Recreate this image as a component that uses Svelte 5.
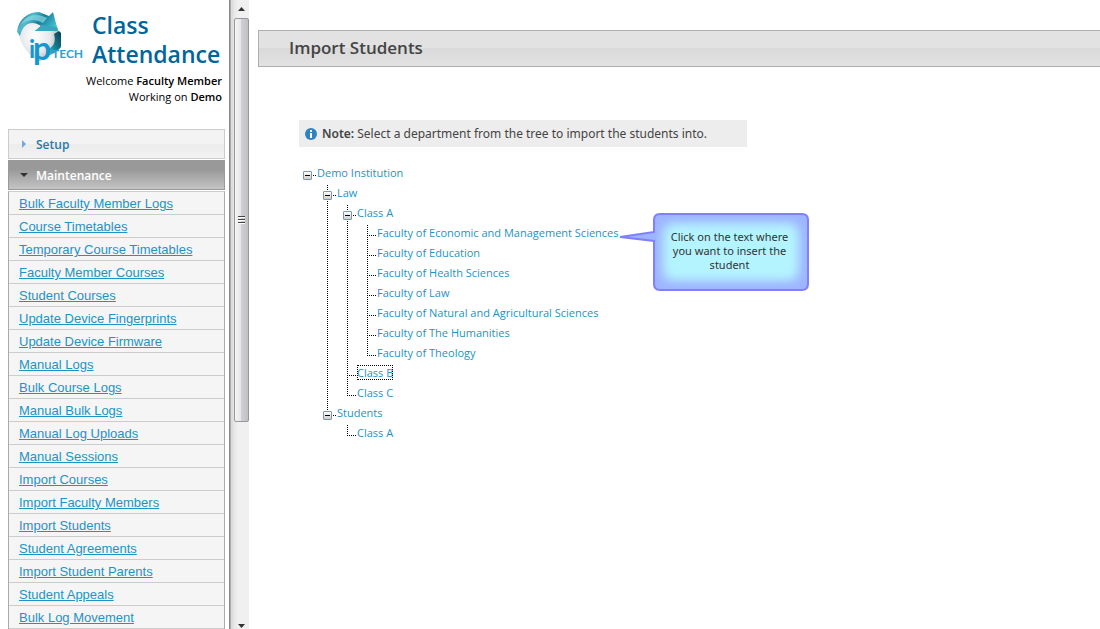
<script>
  const links = [
    "Bulk Faculty Member Logs",
    "Course Timetables",
    "Temporary Course Timetables",
    "Faculty Member Courses",
    "Student Courses",
    "Update Device Fingerprints",
    "Update Device Firmware",
    "Manual Logs",
    "Bulk Course Logs",
    "Manual Bulk Logs",
    "Manual Log Uploads",
    "Manual Sessions",
    "Import Courses",
    "Import Faculty Members",
    "Import Students",
    "Student Agreements",
    "Import Student Parents",
    "Student Appeals",
    "Bulk Log Movement",
  ];

  let tree = $state([
    {
      name: "Demo Institution",
      open: true,
      children: [
        {
          name: "Law",
          open: true,
          children: [
            {
              name: "Class A",
              open: true,
              children: [
                { name: "Faculty of Economic and Management Sciences" },
                { name: "Faculty of Education" },
                { name: "Faculty of Health Sciences" },
                { name: "Faculty of Law" },
                { name: "Faculty of Natural and Agricultural Sciences" },
                { name: "Faculty of The Humanities" },
                { name: "Faculty of Theology" },
              ],
            },
            { name: "Class B", id: "class-b" },
            { name: "Class C" },
          ],
        },
        {
          name: "Students",
          open: true,
          children: [{ name: "Class A", id: "students-a" }],
        },
      ],
    },
  ]);

  let selected = $state("class-b");
  let maintenanceOpen = $state(true);

  function select(e, node) {
    e.preventDefault();
    selected = node.id ?? node.name;
  }
</script>

{#snippet branch(nodes)}
  <ul>
    {#each nodes as node}
      <li>
        <div class="node">
          <span class="joint">
            {#if node.children}
              <button
                class="toggle"
                class:closed={!node.open}
                aria-label={node.open ? "Collapse" : "Expand"}
                aria-expanded={node.open}
                onclick={() => (node.open = !node.open)}
              ></button>
            {/if}
          </span>
          <a
            href="#import"
            class:selected={selected === (node.id ?? node.name)}
            onclick={(e) => select(e, node)}
          >{node.name}</a>
        </div>
        {#if node.children && node.open}
          {@render branch(node.children)}
        {/if}
      </li>
    {/each}
  </ul>
{/snippet}

<div class="layout">
  <aside>
    <div class="side">
      <header>
        <svg class="logo" width="72" height="58" viewBox="0 0 72 58" aria-hidden="true">
          <defs>
            <radialGradient id="ball" cx="0.4" cy="0.45" r="0.65">
              <stop offset="0" stop-color="#ffffff" />
              <stop offset="0.6" stop-color="#e4e7ea" />
              <stop offset="1" stop-color="#a3abb0" />
            </radialGradient>
            <linearGradient id="arrow" x1="0" y1="0" x2="1" y2="0.5">
              <stop offset="0" stop-color="#0a5266" />
              <stop offset="0.35" stop-color="#54bccf" />
              <stop offset="0.6" stop-color="#137f96" />
              <stop offset="1" stop-color="#4cc3d6" />
            </linearGradient>
            <linearGradient id="tail" x1="1" y1="0" x2="0" y2="1">
              <stop offset="0" stop-color="#093c49" />
              <stop offset="0.6" stop-color="#1b8ba2" />
              <stop offset="1" stop-color="#7cd7e2" />
            </linearGradient>
          </defs>
          <path d="M3 17C5 7 14 4 24 5C37 6 44 16 43 27C42 39 32 46 24 50C12 45 1 30 3 17Z" fill="url(#ball)" />
          <path d="M1 21C2 8 12 1 23 1L33 5 37 1 42 20 19 20 25 15C16 9 7 12 4 25Z" fill="url(#arrow)" />
          <path d="M4 15C9 4 20 1 31 7L27 12C18 7 10 8 4 15Z" fill="#8bd8e3" opacity="0.7" />
          <path d="M19 20 26 14 41 16 42 20Z" fill="#35a9bf" />
          <path d="M43 20 45 22 45 36C41 41 36 44 30 45L32 38C38 36 40 30 38 23Z" fill="url(#tail)" />
          <text class="i" x="13" y="47">i</text>
          <text class="p" x="17" y="49">p</text>
          <text class="tech" x="36" y="47">TECH</text>
        </svg>
        <h1>Class Attendance</h1>
      </header>
      <p class="who">Welcome <b>Faculty Member</b><br />Working on <b>Demo</b></p>

      <nav>
        <button class="section">
          <svg width="4" height="8" viewBox="0 0 4 8" aria-hidden="true"><path d="M0 0 4 4 0 8Z" fill="#72a7e0" /></svg>
          Setup
        </button>
        <button class="section active" aria-expanded={maintenanceOpen} onclick={() => (maintenanceOpen = !maintenanceOpen)}>
          <svg width="8" height="4" viewBox="0 0 8 4" aria-hidden="true"><path d="M0 0H8L4 4Z" fill="#333" /></svg>
          Maintenance
        </button>
        {#if maintenanceOpen}
          <ul class="links">
            {#each links as link}
              <li><a href="#nav">{link}</a></li>
            {/each}
          </ul>
        {/if}
      </nav>
    </div>

    <div class="splitter"></div>
    <div class="scrollbar">
      <svg width="7" height="4" viewBox="0 0 7 4" aria-hidden="true"><path d="M0 4H7L3.500 0Z" fill="#333" /></svg>
      <div class="thumb"><i></i><i></i><i></i></div>
      <svg width="7" height="4" viewBox="0 0 7 4" aria-hidden="true"><path d="M0 0H7L3.500 4Z" fill="#333" /></svg>
    </div>
  </aside>

  <main>
    <h2>Import Students</h2>
    <div class="content">
      <p class="note">
        <svg width="12" height="12" viewBox="0 0 12 12" aria-hidden="true">
          <circle cx="6" cy="6" r="6" fill="#2e83c3" />
          <path d="M5 2H7V4H5ZM5 5H7V10H5Z" fill="#fff" />
        </svg>
        <span><b>Note:</b> Select a department from the tree to import the students into.</span>
      </p>
      <div class="tree">
        {@render branch(tree)}
        <div class="callout">
          <svg width="200" height="80" viewBox="0 0 200 80" aria-hidden="true">
            <defs>
              <filter id="soft" x="-20%" y="-20%" width="140%" height="140%">
                <feGaussianBlur stdDeviation="6" />
              </filter>
              <clipPath id="bubble">
                <path d="M49 2H191Q197 2 197 8V72Q197 78 191 78H49Q43 78 43 72V29L9 25 43 20V8Q43 2 49 2Z" />
              </clipPath>
            </defs>
            <g clip-path="url(#bubble)">
              <rect width="200" height="80" fill="#9db3ff" />
              <rect x="53" y="12" width="134" height="56" rx="6" fill="#b4f4ff" filter="url(#soft)" />
              <rect x="58" y="18" width="124" height="44" rx="6" fill="#b4f4ff" filter="url(#soft)" />
            </g>
            <path
              d="M49 2H191Q197 2 197 8V72Q197 78 191 78H49Q43 78 43 72V29L9 25 43 20V8Q43 2 49 2Z"
              fill="none"
              stroke="#8080ff"
              stroke-width="2"
            />
          </svg>
          <p>Click on the text where you want to insert the student</p>
        </div>
      </div>
    </div>
  </main>
</div>

<style>
  :global(body) {
    margin: 0;
    background: #fff;
  }
  .layout {
    display: flex;
    height: 100vh;
    overflow: hidden;
    font-family: "Trebuchet MS", "Open Sans", sans-serif;
    font-size: 11px;
    color: #000;
  }
  h1, h2, p, ul {
    margin: 0;
    padding: 0;
  }
  ul { list-style: none; }
  b { font-weight: 600; }

  aside {
    display: flex;
    flex: none;
    width: 249px;
  }
  .side {
    flex: 1;
    padding: 11px 4px 0 8px;
    overflow: hidden;
  }
  header {
    display: flex;
    gap: 4px;
    padding-left: 8px;
  }
  .logo {
    flex: none;
    overflow: visible;
  }
  .i, .p {
    font: 700 24px Lato, sans-serif;
    fill: #1496cf;
  }
  .p { font-size: 32px; }
  .tech {
    font: 700 12px Lato, sans-serif;
    fill: #2aa3d3;
  }
  h1 {
    font-size: 23px;
    line-height: 29px;
    font-weight: 600;
    color: #069;
  }
  .who {
    padding: 4px 3px 0 0;
    line-height: 16px;
    text-align: right;
  }
  nav {
    display: flex;
    flex-direction: column;
    margin-top: 24px;
  }
  .section {
    display: flex;
    align-items: center;
    gap: 10px;
    height: 30px;
    margin-bottom: 1px;
    padding: 0 13px;
    border: 1px solid #ccc;
    background: linear-gradient(#f3f3f3 50%, #ececec 50%, #f2f2f2);
    color: #2779aa;
    font: inherit;
    font-size: 12px;
    font-weight: 600;
    cursor: pointer;
  }
  .section.active {
    gap: 8px;
    padding: 0 11px;
    border-color: #999;
    background: linear-gradient(#999 30%, #c4c4c4);
    color: #fff;
  }
  .links {
    border: 1px solid #aaa;
    border-top-color: #ccc;
    background: #f5f5f5;
  }
  .links li {
    padding: 2px 0 0 10px;
    border-bottom: 1px solid #ccc;
    font: 13px/20px "Liberation Sans", sans-serif;
  }
  .links a { color: #1c94c4; }

  .splitter {
    width: 4px;
    background: linear-gradient(90deg, #888 1px, #aaa 1px 2px, #ddd 2px);
  }
  .scrollbar {
    display: flex;
    flex-direction: column;
    align-items: center;
    width: 16px;
    padding: 7px 0 1px;
    box-sizing: border-box;
    background: linear-gradient(90deg, #e3e3e3, #f0f0f0 30%);
  }
  .thumb {
    display: flex;
    flex: 0 0 65%;
    flex-direction: column;
    align-items: center;
    justify-content: center;
    gap: 1px;
    width: 15px;
    margin: 7px 0 auto;
    box-sizing: border-box;
    border: 1px solid #979797;
    border-radius: 2px;
    background: linear-gradient(90deg, #f5f5f5, #e6e6e8 45%, #cfcfd3 50%, #bfbfc5);
  }
  .thumb i {
    width: 7px;
    height: 1px;
    border-bottom: 1px solid #fff;
    background: #444;
  }

  main {
    flex: 1;
    min-width: 0;
    padding: 30px 0 0 9px;
  }
  h2 {
    padding: 0 0 2px 30px;
    border: 1px solid #aeaeae;
    border-right: 0;
    background: linear-gradient(#e2e2e2 50%, #dadada 50%, #e2e2e2);
    font-size: 17px;
    line-height: 33px;
    font-weight: 600;
    color: #444;
  }
  .content { padding: 53px 41px; }
  .note {
    display: flex;
    align-items: center;
    gap: 5px;
    max-width: 442px;
    padding-left: 6px;
    background: #ededed;
    font-family: "Noto Sans", sans-serif;
    font-size: 12px;
    line-height: 27px;
    color: #444;
    white-space: nowrap;
  }

  .tree {
    position: relative;
    margin-top: 18px;
    padding-left: 8px;
  }
  .tree ul ul { padding-left: 20px; }
  .tree li:not(:last-child) {
    background: repeating-linear-gradient(#000 0 1px, transparent 1px 2px) 0 0 / 1px 100% no-repeat;
  }
  .node {
    display: flex;
    height: 20px;
  }
  .joint {
    width: 10px;
    height: 11px;
    background:
      repeating-linear-gradient(#000 0 1px, transparent 1px 2px) 0 0 / 1px 100% no-repeat,
      repeating-linear-gradient(90deg, #000 0 1px, transparent 1px 2px) 0 100% / 100% 1px no-repeat;
  }
  .tree > ul > li > .node > .joint {
    background: repeating-linear-gradient(90deg, #000 0 1px, transparent 1px 2px) 0 100% / 100% 1px no-repeat;
  }
  .toggle {
    display: block;
    width: 9px;
    height: 9px;
    margin: 6px 0 0 -4px;
    padding: 0;
    border: 1px solid #7898b5;
    border-radius: 1px;
    background:
      linear-gradient(#000, #000) center / 5px 1px no-repeat,
      linear-gradient(#fff, #d2cdc3);
  }
  .toggle.closed {
    background:
      linear-gradient(#000, #000) center / 5px 1px no-repeat,
      linear-gradient(#000, #000) center / 1px 5px no-repeat,
      linear-gradient(#fff, #d2cdc3);
  }
  .node a {
    height: 15px;
    line-height: 15px;
    color: #1c94c4;
    text-decoration: none;
    white-space: nowrap;
  }
  .node a.selected {
    outline: 1px dotted #000;
    outline-offset: -1px;
  }

  .callout {
    position: absolute;
    top: 47px;
    left: 312px;
    width: 200px;
    height: 80px;
  }
  .callout p {
    position: absolute;
    inset: 18px 15px auto 52px;
    font-family: "Noto Sans", sans-serif;
    line-height: 14px;
    text-align: center;
    color: #333;
  }
</style>
